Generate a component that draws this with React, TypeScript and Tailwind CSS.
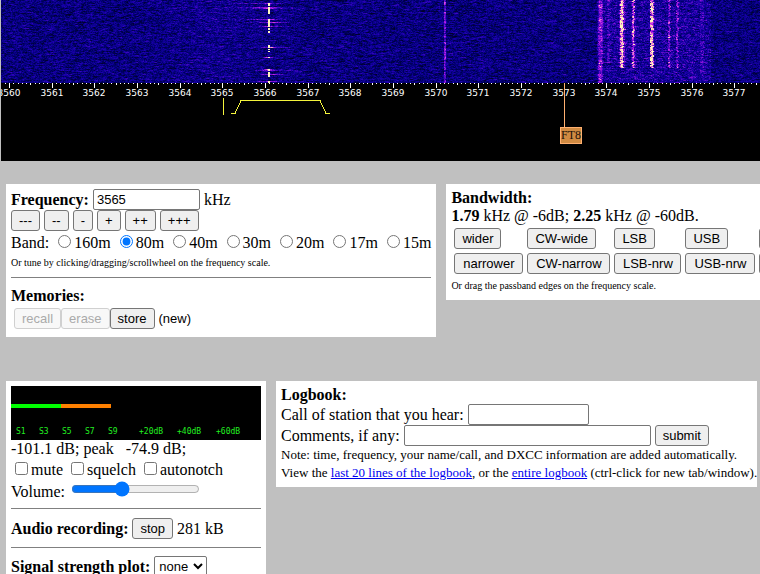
import { useLayoutEffect, useRef } from "react";
import type { ButtonHTMLAttributes, InputHTMLAttributes, ReactNode } from "react";

const WATERFALL_WIDTH = 1024;
const WATERFALL_HEIGHT = 83;

const bands = ["160m", "80m", "40m", "30m", "20m", "17m", "15m"];
const steps = ["---", "--", "-", "+", "++", "+++"];
const filters = [
  { wide: "wider", narrow: "narrower" },
  { wide: "CW-wide", narrow: "CW-narrow" },
  { wide: "LSB", narrow: "LSB-nrw" },
  { wide: "USB", narrow: "USB-nrw" },
  { wide: "AM", narrow: "AM-nrw" },
];

// level, red, green, blue
const palette = [
  [0, 0, 0, 30],
  [0.2, 0, 0, 110],
  [0.4, 24, 0, 170],
  [0.55, 90, 10, 200],
  [0.75, 190, 30, 235],
  [0.9, 250, 170, 190],
  [1, 255, 245, 190],
];

// vertical traces: left edge, width, strength, last row
const traces = [
  [443, 2, 0.36, 83],
  [597, 5, 0.2, 83],
  [598, 3, 0.14, 83],
  [606, 3, 0.12, 64],
  [618, 6, 0.22, 68],
  [619, 3, 0.42, 68],
  [630, 5, 0.12, 68],
  [631, 2, 0.34, 68],
  [649, 4, 0.16, 68],
  [649, 3, 0.46, 68],
  [667, 2, 0.3, 68],
  [675, 2, 0.26, 68],
  [699, 4, 0.1, 83],
];

const morse = [[3, 6], [7, 14], [19, 27], [28, 30], [31, 33], [45, 48], [49, 50], [51, 52], [57, 58], [69, 71], [72, 77], [81, 83]];

// row, reach to the left, reach to the right
const clicks = [
  [3, 16, 8],
  [7, 20, 12],
  [8, 13, 18],
  [19, 16, 8],
  [22, 10, 14],
  [26, 12, 11],
  [47, 8, 17],
  [57, 6, 4],
  [69, 8, 6],
  [70, 10, 10],
  [74, 8, 15],
  [81, 11, 8],
];

function random(seed: number) {
  let s = seed;
  return () => {
    s = (s * 1664525 + 1013904223) >>> 0;
    return s / 4294967296;
  };
}

function color(level: number) {
  const v = Math.max(0, Math.min(1, level));
  let i = 1;
  while (i < palette.length - 1 && palette[i][0] < v) i++;
  const a = palette[i - 1];
  const b = palette[i];
  const t = (v - a[0]) / (b[0] - a[0]);
  return [1, 2, 3].map((c) => a[c] + (b[c] - a[c]) * t);
}

function Waterfall() {
  const ref = useRef<HTMLCanvasElement>(null);

  useLayoutEffect(() => {
    const ctx = ref.current?.getContext("2d");
    if (!ctx) return;
    const rnd = random(3565);
    const image = ctx.createImageData(WATERFALL_WIDTH, WATERFALL_HEIGHT);
    const fade = traces.map(() => 0.7);

    for (let y = 0; y < WATERFALL_HEIGHT; y++) {
      const click = clicks.find(([row]) => row === y);
      // signals fade in and out over a few rows and drift by a pixel
      if (y % 2 === 0) traces.forEach((_, i) => (fade[i] = fade[i] * 0.3 + (0.15 + rnd()) * 0.7));
      const drift = rnd() < 0.3 ? 1 : 0;
      let prev = 0.2;
      for (let x = 0; x < WATERFALL_WIDTH; x++) {
        prev = prev * 0.5 + (rnd() * 0.56 - 0.03) * 0.5;
        let v = prev;
        v += 0.05 * Math.exp(-(((x - 215) / 45) ** 2));
        if (x > 595 && x < 710) v += rnd() * 0.16 + 0.02;

        traces.forEach(([left, width, power, end], i) => {
          const from = end < 83 ? left + drift : left;
          if (x >= from && x < from + width && y < end) v += power * (0.3 + rnd() * 0.4 + fade[i] * 0.6);
        });

        const offset = x - 268;
        if (click) v += 0.5 * Math.exp(-Math.abs(offset) / (offset < 0 ? click[1] : click[2]));
        if ((offset === 0 || offset === -1) && morse.some(([from, to]) => y >= from && y < to)) v = 1;

        const [r, g, b] = color(v);
        const p = (y * WATERFALL_WIDTH + x) * 4;
        image.data[p] = r;
        image.data[p + 1] = g;
        image.data[p + 2] = b;
        image.data[p + 3] = 255;
      }
    }
    ctx.putImageData(image, 0, 0);
  }, []);

  return <canvas ref={ref} width={WATERFALL_WIDTH} height={WATERFALL_HEIGHT} className="block max-w-none" />;
}

function FrequencyScale() {
  const x = (khz: number) => Math.round(8 + (khz - 3560) * 42.66);
  const ticks = Array.from({ length: 178 }, (_, i) => 35599 + i);

  return (
    <svg width={WATERFALL_WIDTH} height="78" className="block max-w-none" shapeRendering="crispEdges">
      {ticks.map((t) => (
        <rect key={t} x={x(t / 10)} y="0" width="1" height={t % 10 === 0 ? 5 : t % 5 === 0 ? 2 : 1} fill="#fff" />
      ))}
      {ticks.filter((t) => t % 10 === 0).map((t) => (
        <text key={t} x={x(t / 10)} y="13" textAnchor="middle" fill="#fff" fontSize="9" fontFamily="DejaVu Sans, sans-serif">
          {t / 10}
        </text>
      ))}
      <path d="M222.5 15v17M230 30.5h4l6-13h79l6 13h4" fill="none" stroke="#f4f43c" />
      <path d="M563.5 0v44" stroke="#ffb070" />
      <rect x="559.5" y="44.5" width="21" height="16" fill="#d08a42" stroke="#ffb070" />
      <text x="570" y="56" textAnchor="middle" fontSize="12" fill="#1c1008" fontFamily="Liberation Serif, serif">FT8</text>
    </svg>
  );
}

function SignalMeter() {
  const marks = [
    { label: "S1", at: 5 },
    { label: "S3", at: 28 },
    { label: "S5", at: 51 },
    { label: "S7", at: 74 },
    { label: "S9", at: 97 },
    { label: "+20dB", at: 128 },
    { label: "+40dB", at: 166 },
    { label: "+60dB", at: 205 },
  ];

  return (
    <svg width="250" height="54" className="block bg-black">
      <rect x="0" y="18" width="50" height="4" fill="#00ff00" />
      <rect x="50" y="18" width="50" height="4" fill="#ff8000" />
      {marks.map((m) => (
        <text key={m.label} x={m.at} y="48" fontSize="8" fill="#22f022" fontFamily="DejaVu Sans Mono, monospace">
          {m.label}
        </text>
      ))}
    </svg>
  );
}

function Panel({ className = "pr-[5px]", children }: { className?: string; children: ReactNode }) {
  return <section className={`shrink-0 bg-white py-[5px] pl-[5px] ${className}`}>{children}</section>;
}

function Button({ className = "", ...props }: ButtonHTMLAttributes<HTMLButtonElement>) {
  return (
    <button
      type="button"
      className={`h-[21px] rounded-[3px] border border-[#767676] bg-[#efefef] px-[7px] font-['Liberation_Sans',Arial,sans-serif] text-[13px] leading-[19px] disabled:border-[#d0d0d0] disabled:bg-[#f8f8f8] disabled:text-[#aaaaaa] ${className}`}
      {...props}
    />
  );
}

function TextInput({ className = "", ...props }: InputHTMLAttributes<HTMLInputElement>) {
  return (
    <input
      type="text"
      className={`h-[21px] rounded-[2px] border border-[#767676] bg-white px-[3px] font-['Liberation_Sans',Arial,sans-serif] text-[13px] ${className}`}
      {...props}
    />
  );
}

function FrequencyPanel() {
  return (
    <Panel>
      <div className="flex items-center gap-1">
        <label htmlFor="frequency" className="font-bold">Frequency:</label>
        <TextInput id="frequency" defaultValue="3565" className="w-[107px]" />
        <span>kHz</span>
      </div>
      <div className="flex gap-1">
        {steps.map((step) => (
          <Button key={step}>{step}</Button>
        ))}
      </div>
      <div className="flex h-[23px] items-center gap-[9px]">
        <span>Band:</span>
        {bands.map((band) => (
          <label key={band} className="flex items-center gap-[3px]">
            <input type="radio" name="band" defaultChecked={band === "80m"} className="mb-[3px] size-[13px] accent-[#0075ff]" />
            {band}
          </label>
        ))}
      </div>
      <p className="text-[10px]">Or tune by clicking/dragging/scrollwheel on the frequency scale.</p>
      <hr className="mt-[5px] mb-[9px] border-[#808080]" />
      <h2 className="font-bold">Memories:</h2>
      <div className="flex items-center p-[3px]">
        <Button disabled>recall</Button>
        <Button disabled>erase</Button>
        <Button>store</Button>
        <span className="ml-1 font-['Liberation_Sans',Arial,sans-serif] text-[13px]">(new)</span>
      </div>
    </Panel>
  );
}

function BandwidthPanel() {
  return (
    <Panel>
      <h2 className="font-bold">Bandwidth:</h2>
      <p>
        <b>1.79</b> kHz @ -6dB; <b>2.25</b> kHz @ -60dB.
      </p>
      <div className="grid grid-cols-[69px_83px_67px_70px_70px] gap-1 p-[3px]">
        {filters.map((filter) => (
          <div key={filter.wide} className="flex flex-col gap-1">
            <Button className="self-start">{filter.wide}</Button>
            <Button>{filter.narrow}</Button>
          </div>
        ))}
      </div>
      <p className="text-[10px]">Or drag the passband edges on the frequency scale.</p>
    </Panel>
  );
}

function AudioPanel() {
  return (
    <Panel>
      <SignalMeter />
      <p className="whitespace-pre">-101.1 dB; peak   -74.9 dB;</p>
      <div className="flex h-[23px] items-center gap-2 pl-1">
        {["mute", "squelch", "autonotch"].map((name) => (
          <label key={name} className="flex items-center gap-[3px]">
            <input type="checkbox" className="mb-[3px] size-[13px]" />
            {name}
          </label>
        ))}
      </div>
      <div className="flex h-[22px] items-center gap-[6px]">
        <label htmlFor="volume">Volume:</label>
        <input id="volume" type="range" defaultValue="38" className="mb-[6px] h-4 w-[129px] accent-[#0075ff]" />
      </div>
      <hr className="mt-[5px] mb-[9px] border-[#808080]" />
      <div className="flex items-center gap-1">
        <b>Audio recording:</b>
        <Button>stop</Button>
        <span>281 kB</span>
      </div>
      <hr className="my-2 border-[#808080]" />
      <div className="flex items-center gap-1">
        <label htmlFor="plot" className="font-bold">Signal strength plot:</label>
        <select id="plot" className="h-[21px] w-[53px] rounded-[2px] border border-[#767676] bg-white font-['Liberation_Sans',Arial,sans-serif] text-[13px]">
          <option>none</option>
          <option>slow</option>
          <option>fast</option>
        </select>
      </div>
    </Panel>
  );
}

function LogbookPanel() {
  return (
    <Panel className="pr-0">
      <h2 className="font-bold">Logbook:</h2>
      <div className="flex items-center gap-1">
        <label htmlFor="call">Call of station that you hear:</label>
        <TextInput id="call" className="w-[121px]" />
      </div>
      <div className="flex items-center gap-1">
        <label htmlFor="comments">Comments, if any:</label>
        <TextInput id="comments" className="w-[247px]" />
        <Button>submit</Button>
      </div>
      <p className="text-[13px]">Note: time, frequency, your name/call, and DXCC information are added automatically.</p>
      <p className="text-[13px]">
        View the <a href="#last" className="text-[#0000ee] underline">last 20 lines of the logbook</a>, or the{" "}
        <a href="#all" className="text-[#0000ee] underline">entire logbook</a> (ctrl-click for new tab/window).
      </p>
    </Panel>
  );
}

export default function App() {
  return (
    <main className="h-screen overflow-hidden bg-[#c0c0c0] font-['Liberation_Serif','Times_New_Roman',serif] text-[16px] leading-[18px] whitespace-nowrap text-black">
      <div className="ml-px overflow-hidden bg-black">
        <Waterfall />
        <FrequencyScale />
      </div>
      <div className="flex items-start gap-[10px] px-[6px] pt-[23px]">
        <FrequencyPanel />
        <BandwidthPanel />
      </div>
      <div className="flex items-start gap-[10px] px-[6px] pt-11">
        <AudioPanel />
        <LogbookPanel />
      </div>
    </main>
  );
}
